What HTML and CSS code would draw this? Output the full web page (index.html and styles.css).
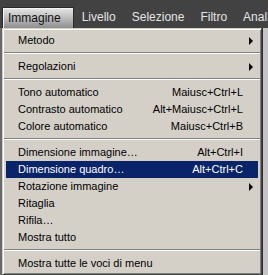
FILE: index.html
```html
<!DOCTYPE html>
<html lang="it">
<head>
  <meta charset="UTF-8" />
  <title>Immagine</title>
  <link rel="stylesheet" href="styles.css">
</head>
<body>

  <div class="menubar">
    <div class="top-item open">Immagine</div>
    <div class="top-item">Livello</div>
    <div class="top-item">Selezione</div>
    <div class="top-item">Filtro</div>
    <div class="top-item">Analisi</div>
  </div>

  <div class="workspace">
    <div class="edge-left"></div>

    <div class="menu">
      <div class="item sub"><span class="label">Metodo</span></div>
      <div class="sep"></div>
      <div class="item sub"><span class="label">Regolazioni</span></div>
      <div class="sep"></div>
      <div class="item"><span class="label">Tono automatico</span><span class="key">Maiusc+Ctrl+L</span></div>
      <div class="item"><span class="label">Contrasto automatico</span><span class="key">Alt+Maiusc+Ctrl+L</span></div>
      <div class="item"><span class="label">Colore automatico</span><span class="key">Maiusc+Ctrl+B</span></div>
      <div class="sep"></div>
      <div class="item"><span class="label">Dimensione immagine…</span><span class="key">Alt+Ctrl+I</span></div>
      <div class="item active"><span class="label">Dimensione quadro…</span><span class="key">Alt+Ctrl+C</span></div>
      <div class="item sub"><span class="label">Rotazione immagine</span></div>
      <div class="item"><span class="label">Ritaglia</span></div>
      <div class="item"><span class="label">Rifila…</span></div>
      <div class="item"><span class="label">Mostra tutto</span></div>
      <div class="sep"></div>
      <div class="item"><span class="label">Mostra tutte le voci di menu</span></div>
    </div>

    <div class="edge-right"></div>
  </div>

</body>
</html>
```

FILE: styles.css
```css
body {
  margin: 0;
  background: #9a9a9a;
  font-family: "Liberation Sans", Arial, sans-serif;
  overflow: hidden;
}

.menubar {
  display: flex;
  align-items: flex-end;
  height: 28px;
  padding-left: 2px;
  background: #424242;
  white-space: nowrap;
}

.top-item {
  font-size: 12px;
  line-height: 22px;
  padding: 0 8px;
  color: #e4e4e4;
}

.top-item.open {
  padding: 0 12px 0 5px;
  height: 20px;
  line-height: 20px;
  color: #111;
  border: 1px solid #2a2a2a;
  border-bottom: none;
  box-shadow: inset 1px 1px #f4f4f4;
  background: linear-gradient(#e6e6e6, #b4b4b4 60%, #8e8e8e);
}

.workspace {
  display: flex;
}

.edge-left {
  width: 2px;
  background: #6a6a6a;
}

.edge-right {
  flex: 1;
  background: #c4c4c4;
  border-left: 1px solid #2e2e2e;
}

.menu {
  width: 252px;
  padding: 3px 3px 2px;
  background: #d4d0c8;
  border: 1px solid;
  border-color: #d4d0c8 #404040 #404040 #d4d0c8;
  box-shadow: inset 1px 1px #fff, inset -1px -1px #808080;
  font-size: 11px;
  color: #000;
}

.item {
  display: flex;
  height: 17px;
  line-height: 17px;
  padding: 0 15px 0 12px;
  white-space: nowrap;
}

.item .label {
  flex: 1;
}

.item.active {
  background: #0a246a;
  color: #fff;
}

.item.sub::after {
  content: "";
  align-self: center;
  margin: 0 -10px 0 6px;
  border-left: 4px solid #000;
  border-top: 4px solid transparent;
  border-bottom: 4px solid transparent;
}

.sep {
  height: 1px;
  margin: 3px -2px 4px;
  background: #808080;
  border-bottom: 1px solid #fff;
}
```
